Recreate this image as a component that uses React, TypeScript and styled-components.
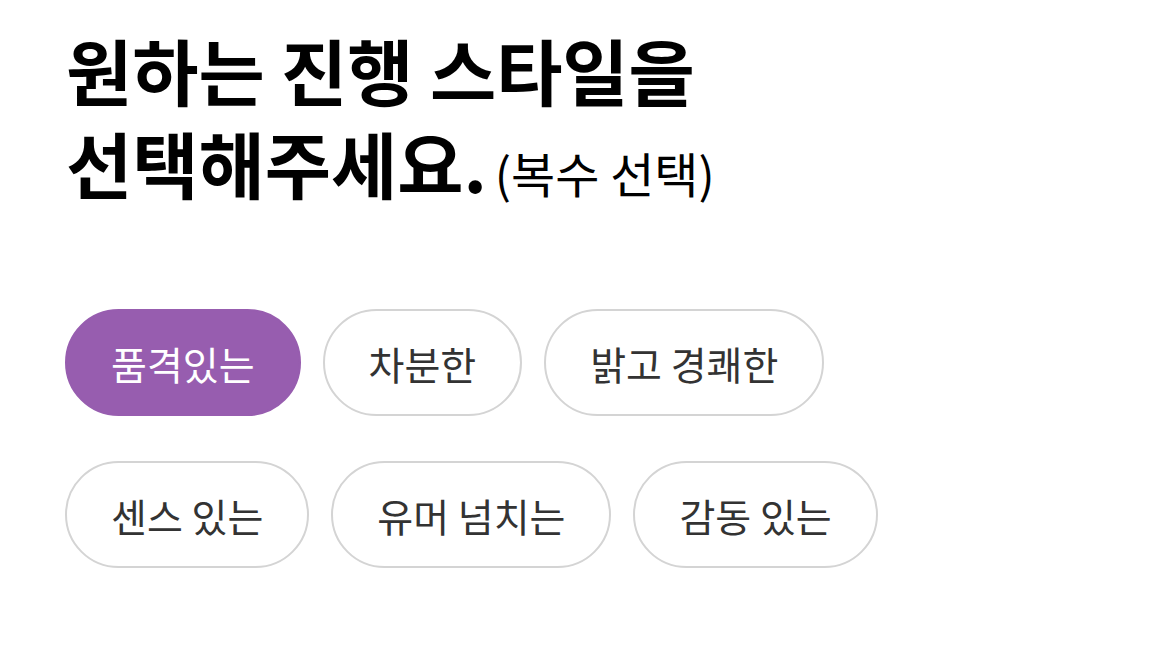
import styled, { createGlobalStyle } from "styled-components";
import { useState } from "react";

const GlobalStyle = createGlobalStyle`
	html, body {
		margin: 0;
		padding: 0;
		background: #ffffff;
	}
	body {
		font-family: "Noto Sans CJK KR", "Noto Sans", sans-serif;
		color: #000000;
	}
`;

const Page = styled.main`
	padding: 22px 0 0 66px;
`;

const Title = styled.h1`
	margin: 0;
	font-size: 72px;
	font-weight: 700;
	line-height: 93px;
	letter-spacing: 0;
`;

const SubTitle = styled.span`
	font-size: 48px;
	font-weight: 400;
	margin-left: 8px;
`;

const ChipList = styled.div`
	display: flex;
	flex-wrap: wrap;
	column-gap: 22px;
	row-gap: 45px;
	margin-top: 90px;
	margin-left: -1px;
	max-width: 900px;
`;

const Chip = styled.button<{ $selected: boolean }>`
	height: 107px;
	padding: 0 44px;
	border-radius: 54px;
	border: 2px solid ${(props) => (props.$selected ? "#975daf" : "#d4d4d4")};
	background-color: ${(props) => (props.$selected ? "#975daf" : "#ffffff")};
	color: ${(props) => (props.$selected ? "#ffffff" : "#333333")};
	font-family: "Noto Sans CJK KR", "Noto Sans", sans-serif;
	font-size: 39px;
	font-weight: 400;
	cursor: pointer;
	white-space: nowrap;
`;

const styles = ["품격있는", "차분한", "밝고 경쾌한", "센스 있는", "유머 넘치는", "감동 있는"];

function App() {
	const [selected, setSelected] = useState<string[]>(["품격있는"]);

	const toggle = (style: string) => {
		setSelected((prev) =>
			prev.includes(style) ? prev.filter((s) => s !== style) : [...prev, style]
		);
	};

	return (
		<>
			<GlobalStyle />
			<Page>
				<Title>
					원하는 진행 스타일을
					<br />
					선택해주세요.
					<SubTitle>(복수 선택)</SubTitle>
				</Title>
				<ChipList>
					{styles.map((style) => (
						<Chip
							key={style}
							$selected={selected.includes(style)}
							onClick={() => toggle(style)}
						>
							{style}
						</Chip>
					))}
				</ChipList>
			</Page>
		</>
	);
}

export default App;
